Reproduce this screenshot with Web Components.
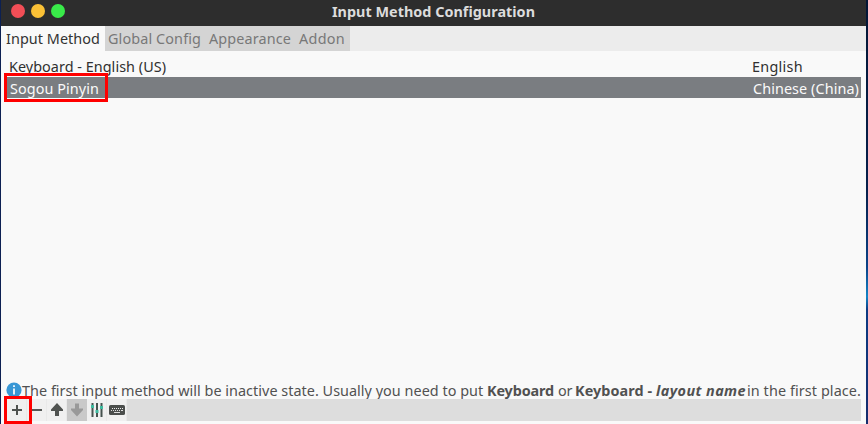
<!DOCTYPE html>
<html lang="en"><head><meta charset="utf-8"><title>Input Method Configuration</title>
<style>html,body{margin:0;height:100%;overflow:hidden;background:#13276a}</style></head>
<body><config-window></config-window>
<script>
const define=(name,html,setup)=>customElements.define(name,class extends HTMLElement{
  constructor(){super();this.attachShadow({mode:'open'}).innerHTML=html}
  connectedCallback(){if(setup)setup(this)}
});
// A single-line label whose tracking is adjusted to fill its width.
define('fit-label',`<style>:host{display:block;flex:none;white-space:pre;height:20px;line-height:20px}span{display:inline-block}</style><span><slot></slot></span>`,el=>{
  const w=+el.getAttribute('width'),s=el.shadowRoot.querySelector('span');
  el.style.width=w+'px';
  s.style.letterSpacing=(w-s.getBoundingClientRect().width)/el.textContent.length+'px';
});
define('title-bar',`<style>
:host{display:flex;height:26px;flex:none;background:#2d2d2d;color:#dcdcdc;font-weight:700;box-sizing:border-box;padding:2px 0 0 10px}
.b{display:flex;gap:6px;width:321px;padding-top:2px}.b i{width:14px;height:14px;border-radius:50%;background:#f24e56}.b i:nth-child(2){background:#fbc136}.b i:nth-child(3){background:#39ea49}
</style><div class="b"><i></i><i></i><i></i></div><fit-label width="203">Input Method Configuration</fit-label>`);
define('tab-bar',`<style>
:host{display:flex;height:25px;flex:none;background:#ececec}
div{display:flex;box-sizing:border-box;padding-top:3px}.on{width:104px;padding-left:5px;background:#f9f9f9;color:#333}.off{width:245px;padding-left:3px;gap:8px;background:#d4d4d4;color:#787878}
</style><div class="on"><fit-label width="94">Input Method</fit-label></div><div class="off"><fit-label width="93">Global Config</fit-label><fit-label width="82">Appearance</fit-label><fit-label width="46">Addon</fit-label></div>`);
define('method-row',`<style>
:host{display:flex;justify-content:space-between;height:21px;color:#303030;margin:0 5px;padding:0 2px 0 3px;line-height:20px}
:host([selected]){background:#7a7d81;color:#fafafa;padding-left:4px}
::slotted(*){margin-top:1px}:host([selected]) ::slotted(*){margin-top:2px}
</style><slot></slot>`);
define('info-line',`<style>
:host{display:flex;height:20px;color:#515151;padding-left:5px}
svg{width:16px;height:16px;flex:none;margin-top:3px}fit-label{margin-top:2px}
.b{font-weight:700}.i{font-style:italic}
</style><svg viewBox="0 0 16 16"><circle cx="8" cy="8" r="7.6" fill="#3997d5"/><path d="M8 3.2v1.8M8 6.5v6" fill="none" stroke="#fff" stroke-width="1.7"/></svg>
<fit-label width="465">The first input method will be inactive state. Usually you need to put </fit-label><fit-label class="b" width="67">Keyboard</fit-label><fit-label style="margin-left:4px" width="14">or</fit-label><fit-label class="b" style="margin-left:3px" width="81">Keyboard - </fit-label><fit-label class="b i" width="90">layout name</fit-label><fit-label style="margin-left:1px" width="114">in the first place.</fit-label>`);
define('tool-bar',`<style>
:host{display:flex;height:22px;background:#ddd;margin:0 5px;padding-left:1px}
span{width:20px;height:22px;box-sizing:border-box;background:#f0f0f0;border-right:1px solid #e9e9e9;flex:none}.off{background:#c9c9c9;border-color:#c9c9c9}
svg{display:block;width:20px;height:22px}
</style>
<span><svg viewBox="0 0 20 22"><path d="M5 11h10M10 6v10" stroke="#4f5250" stroke-width="2"/></svg></span>
<span><svg viewBox="0 0 20 22"><path d="M5 11h10" stroke="#555856" stroke-width="2"/></svg></span>
<span><svg viewBox="0 0 20 22"><path d="M10 4 16 10.5V12H12V17H8V12H4V10.5Z" fill="#505351"/></svg></span>
<span class="off"><svg viewBox="0 0 20 22"><path d="M10 17.5 16 11V9.5H12V4.5H8V9.5H4V11Z" fill="#999"/></svg></span>
<span><svg viewBox="0 0 20 22"><path d="M5.5 4v14M10 4v14M14.5 4v14" stroke="#46524f" stroke-width="2"/><path d="M4 7.5h3M8.5 12.5h3M13 8.5h3" stroke="#3dba9f" stroke-width="3"/></svg></span>
<span><svg viewBox="0 0 20 22"><rect x="2" y="6" width="16" height="10" rx="1.6" fill="#4b4e4c"/><path d="M5 9.5h11" stroke="#eee" stroke-dasharray="1 1"/><path d="M4 11.5h11" stroke="#ddd" stroke-dasharray="1 1"/><path d="M14 11.5h2M7 13.5h6" stroke="#ddd"/></svg></span>`);
define('mark-box',`<style>:host{position:absolute;box-sizing:border-box;border:3px solid #f00;pointer-events:none}</style>`);
define('config-window',`<style>
:host{display:flex;height:424px;box-sizing:border-box;border-left:1px solid #0c2052;padding-right:2px;background:linear-gradient(#031636,#07204c 45%,#0b4287 63%,#1384c6 70%,#0c3b83 73%,#162c6d);position:relative;font:14.4px/20px "Noto Sans",sans-serif}
main{width:865px;display:flex;flex-direction:column;background:#f9f9f9}
section{height:332px;padding-top:5px;box-sizing:border-box}
.a{left:3px;top:73px;width:104px;height:29px}.p{left:3px;top:396px;width:28px;height:28px}
</style><main><title-bar></title-bar><tab-bar></tab-bar><section>
<method-row><fit-label width="157">Keyboard - English (US)</fit-label><fit-label width="51" style="margin-right:56px">English</fit-label></method-row>
<method-row selected><fit-label width="89">Sogou Pinyin</fit-label><fit-label width="106">Chinese (China)</fit-label></method-row>
</section><info-line style="margin-top:-4px"></info-line><tool-bar></tool-bar></main><mark-box class="a"></mark-box><mark-box class="p"></mark-box>`);
</script></body></html>
